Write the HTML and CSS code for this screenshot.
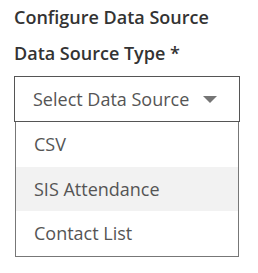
FILE: index.html
```html
<!DOCTYPE html>
<html>
<head>
<meta charset="utf-8">
<link rel="stylesheet" href="styles.css">
</head>
<body>
<div class="panel">
  <h2 class="title">Configure Data Source</h2>
  <label class="label">Data Source Type *</label>
  <div class="select">
    <div class="select-box">
      <span class="select-text">Select Data Source</span>
      <svg class="caret" width="14" height="7" viewBox="0 0 14 7"><path d="M0 0H14L7 7Z" fill="#757575"/></svg>
    </div>
    <ul class="menu">
      <li class="option">CSV</li>
      <li class="option active">SIS Attendance</li>
      <li class="option">Contact List</li>
    </ul>
  </div>
</div>
</body>
</html>
```
FILE: styles.css
```css
html, body {
  margin: 0;
  padding: 0;
  background: #fff;
}
body {
  font-family: "Open Sans", "Liberation Sans", sans-serif;
  color: #333;
}
.panel {
  padding: 5px 0 0 14px;
  width: 226px;
}
.title {
  margin: 0;
  font-size: 18px;
  line-height: 24px;
  font-weight: 600;
  color: #333;
}
.label {
  display: block;
  margin-top: 12px;
  font-size: 18px;
  line-height: 24px;
  font-weight: 600;
  color: #333;
}
.select {
  margin-top: 11px;
}
.select-box {
  box-sizing: border-box;
  height: 46px;
  border: 1px solid #555;
  display: flex;
  align-items: center;
  padding: 0 22px 0 18px;
  gap: 10px;
}
.select-text {
  font-size: 18px;
  color: #555;
  flex: 1;
  white-space: nowrap;
}
.caret {
  display: block;
  flex: none;
}
.menu {
  list-style: none;
  margin: 0 1px;
  padding: 0;
  border: 1px solid #777;
  border-top: none;
  box-sizing: border-box;
}
.option {
  height: 44.5px;
  display: flex;
  align-items: center;
  padding-left: 18px;
  font-size: 18px;
  color: #555;
}
.option.active {
  background: #f2f2f2;
}
```
